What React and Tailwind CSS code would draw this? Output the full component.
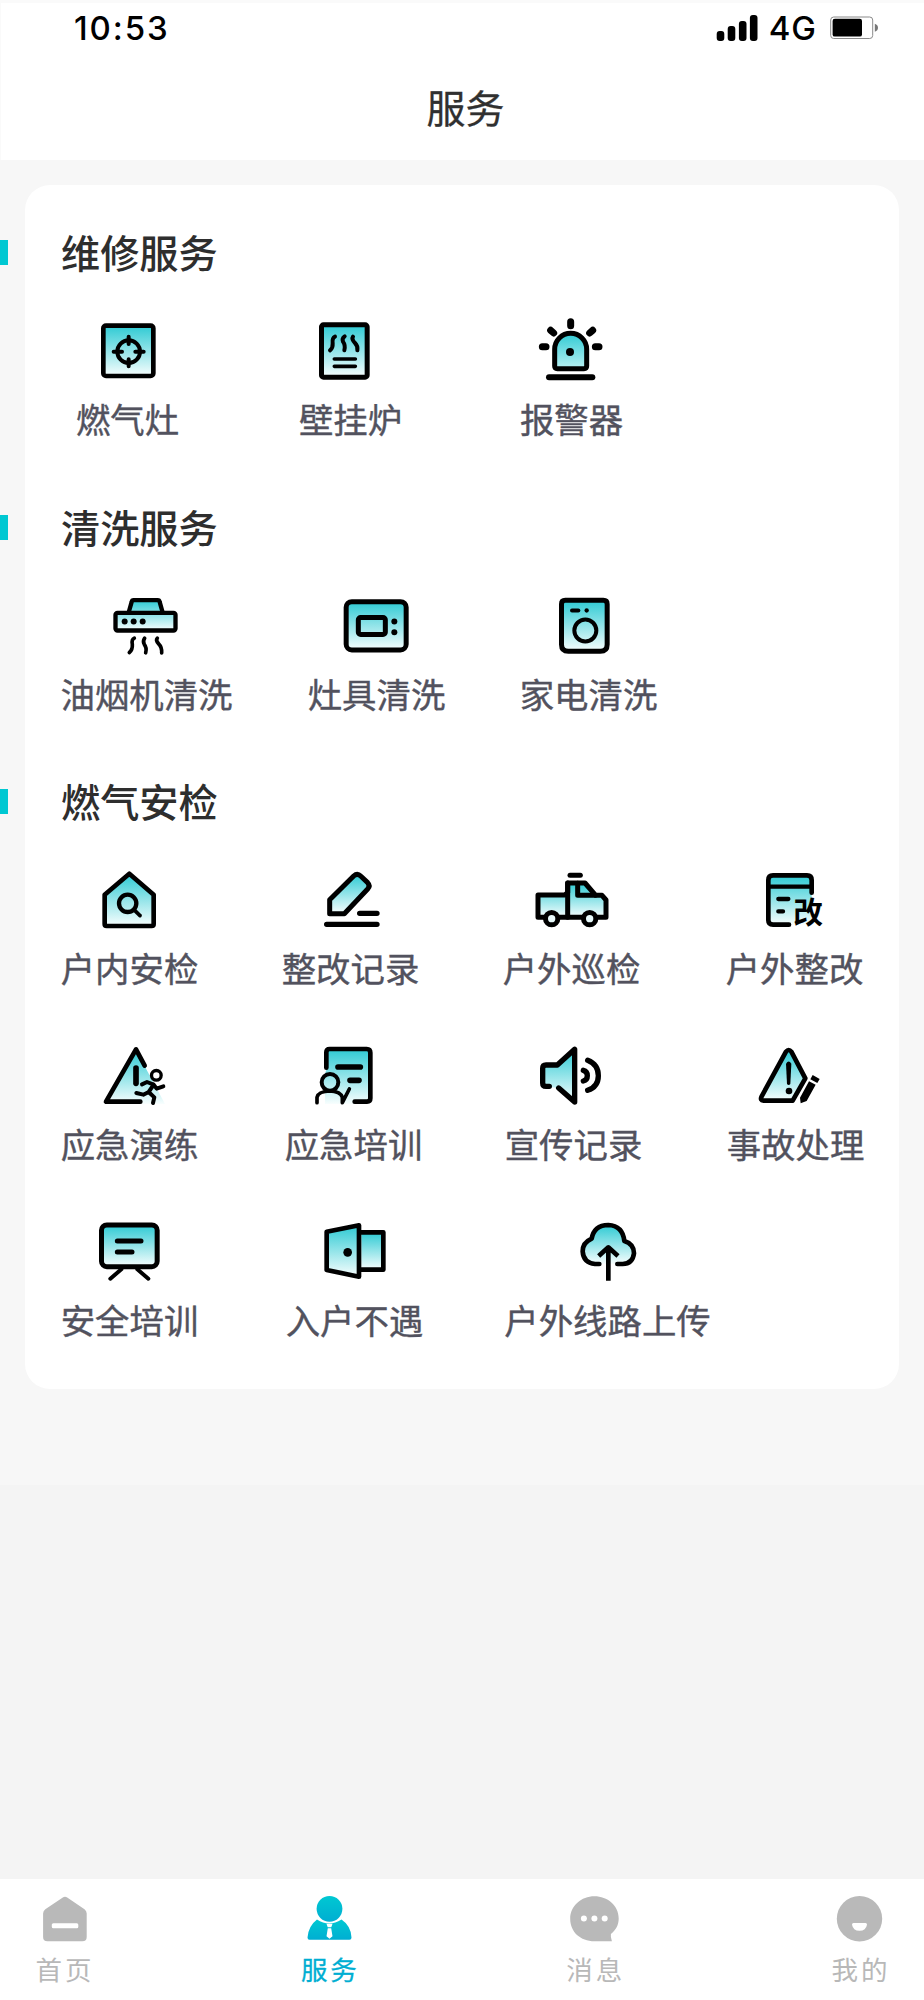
import React from 'react';
import clsx from 'clsx';

const Gradients = () => (
  <svg width="0" height="0" className="absolute" aria-hidden="true">
    <defs>
      <linearGradient id="teal" x1="0" y1="0" x2="0" y2="1">
        <stop offset="0.04" stopColor="#36ccd5" />
        <stop offset="1" stopColor="#f8fefe" />
      </linearGradient>
      <linearGradient id="tealDeep" x1="0" y1="0" x2="0" y2="1">
        <stop offset="0.04" stopColor="#36ccd5" />
        <stop offset="1" stopColor="#b9f1f3" />
      </linearGradient>
      <linearGradient id="active" x1="0" y1="0" x2="0" y2="1">
        <stop offset="0" stopColor="#00c8d2" />
        <stop offset="1" stopColor="#00aed2" />
      </linearGradient>
    </defs>
  </svg>
);

const Glyph = ({ box, w = 14, children }) => (
  <svg
    viewBox={box}
    className="h-20 w-20 shrink-0"
    fill="none"
    stroke="#000"
    strokeWidth={w}
    strokeLinecap="round"
    strokeLinejoin="round"
  >
    {children}
  </svg>
);

const StoveIcon = () => (
  <Glyph box="264 390 240 240">
    <rect x="310" y="437" width="150" height="151" rx="8" fill="url(#teal)" />
    <circle cx="386" cy="515" r="34" strokeWidth="12" />
    <path d="M341 515H366M406 515H431M386 470V492M386 538V559" strokeWidth="12" />
  </Glyph>
);

const BoilerIcon = () => (
  <Glyph box="933 390 240 240" w={15}>
    <rect x="964.5" y="434.5" width="137" height="157" rx="6" fill="url(#teal)" />
    <path d="M1005 470Q996 474 998 490Q999 504 990 511M1034 469Q1025 475 1029 485Q1037 496 1033 511M1059 470Q1054 478 1065 489Q1074 498 1072 511" strokeWidth="12" />
    <path d="M1003 537H1066M1003 559H1066" strokeWidth="11" />
  </Glyph>
);

const AlarmIcon = () => (
  <Glyph box="210 60 240 240" w={15}>
    <path d="M278 228V178a48 48 0 0 1 96 0V228q0 8-8 8H286q-8 0-8-8z" fill="url(#tealDeep)" />
    <circle cx="324" cy="186" r="12" fill="#000" stroke="none" />
    <path d="M326 95V107M266 121L275 129M392 121L383 129M241 170H252M400 170H411" strokeWidth="21" />
    <path d="M261 262H391" strokeWidth="18" />
  </Glyph>
);

const HoodIcon = () => (
  <Glyph box="321 283.5 240 240" w={13}>
    <path d="M386 366L395 334Q396 329 401 329H473Q478 329 479 334L488 366H526V420H347V366Z" fill="url(#teal)" stroke="none" />
    <path d="M386 366L395 334Q396 329 401 329H473Q478 329 479 334L488 366" />
    <rect x="346.5" y="367" width="180" height="53" rx="6" />
    <g fill="#000" stroke="none">
      <circle cx="374" cy="393" r="9" />
      <circle cx="401" cy="393" r="9" />
      <circle cx="428" cy="393" r="9" />
    </g>
    <path d="M403 443Q394 447 397 462Q398 478 388 486M434 443Q427 453 433 462Q441 472 437 487M472 443Q466 450 476 460Q486 470 485 487" strokeWidth="11" />
  </Glyph>
);

const OvenIcon = () => (
  <Glyph box="1011 283.5 240 240" w={15}>
    <rect x="1038.5" y="333.5" width="180" height="145" rx="17" fill="url(#teal)" />
    <rect x="1075" y="381" width="81" height="51" rx="7" />
    <circle cx="1183" cy="393" r="9" fill="#000" stroke="none" />
    <circle cx="1183" cy="425" r="9" fill="#000" stroke="none" />
  </Glyph>
);

const WasherIcon = () => (
  <Glyph box="261 43.5 240 240" w={15}>
    <path d="M310 89.5H424Q435.5 89.5 435.5 101V222Q435.5 242.5 415 242.5H319Q298.5 242.5 298.5 222V101Q298.5 89.5 310 89.5Z" fill="url(#teal)" />
    <circle cx="370" cy="180" r="33" strokeWidth="12" />
    <path d="M330 120H349" strokeWidth="12" />
    <circle cx="374" cy="120" r="6.5" fill="#000" stroke="none" />
  </Glyph>
);

const HouseIcon = () => (
  <Glyph box="270 267 240 240">
    <path d="M388 311L461 374V462Q461 468 455 468H320Q314 468 314 462V374Z" fill="url(#teal)" />
    <circle cx="383" cy="400" r="26" strokeWidth="13" />
    <path d="M404 421L420 437" strokeWidth="11" />
  </Glyph>
);

const EditIcon = () => (
  <Glyph box="933 267 240 240" w={15}>
    <path d="M989 431V389L1061 318Q1072 308 1082 318L1103 338Q1112 347 1103 357L1033 431Z" fill="url(#teal)" />
    <path d="M1079 430H1131M980 463H1131" strokeWidth="16" />
  </Glyph>
);

const TruckIcon = () => (
  <Glyph box="210 27 240 240" w={15}>
    <path d="M228 135H308L317 128V99H369L401 136H420L432 150V202H228Z" fill="url(#teal)" />
    <path d="M317 99V202M347 100V136H400" />
    <path d="M324 76H355" />
    <circle cx="269" cy="206" r="18.5" fill="#e9fbfc" />
    <circle cx="383" cy="206" r="18.5" fill="#e9fbfc" />
  </Glyph>
);

const RectifyIcon = () => (
  <Glyph box="879 27 240 240">
    <path d="M1049 150V90Q1049 76 1035 76H933Q919 76 919 90V211Q919 224 933 224H1049Z" fill="url(#teal)" stroke="none" />
    <path d="M1049 128V90Q1049 76 1035 76H933Q919 76 919 90V211Q919 224 933 224H981" />
    <path d="M919 110H1049M949 147H979M949 184H963" strokeWidth="13" />
    <text x="994" y="219" fontSize="89" fontWeight="700" fill="#000" stroke="none">改</text>
  </Glyph>
);

const DrillIcon = () => (
  <Glyph box="270 15 240 240">
    <path d="M408 60L495 222H318Z" fill="url(#teal)" stroke="none" />
    <path d="M434 107L408 58L318 215H421" />
    <path d="M408 114V160" strokeWidth="17" />
    <circle cx="469" cy="136" r="14.5" strokeWidth="10" />
    <path d="M426 163L441 156L461 164L446 186L463 202L459 219M461 164L470 176L490 169M446 186L430 194L409 189" strokeWidth="12" />
  </Glyph>
);

const CoachIcon = () => (
  <Glyph box="942 15 240 240">
    <path d="M979 57H1111V215L1060 222H975V190L965 157L979 120Z" fill="url(#teal)" stroke="none" />
    <path d="M979 113V67Q979 57 989 57H1100Q1111 57 1111 68V205Q1111 215 1101 215H1064" />
    <path d="M1014 111H1081M1050 151H1077" strokeWidth="17" />
    <circle cx="990" cy="157" r="25" strokeWidth="12" />
    <path d="M951 218V202Q955 184 989 183Q1022 184 1027 202V218L1048 177" strokeWidth="11" />
  </Glyph>
);

const SpeakerIcon = () => (
  <Glyph box="216 15 240 240" w={16}>
    <path d="M242 169V105H287L338 58V216L290 174Z" fill="url(#teal)" stroke="none" />
    <path d="M262 169H252Q242 169 242 159V115Q242 105 252 105H286L338 58V216L290 174" />
    <path d="M364 121Q376 124 376 137Q376 150 364 153M377 91Q409 104 409 137Q409 170 377 181" />
  </Glyph>
);

const AccidentIcon = () => (
  <Glyph box="882 15 240 240">
    <path d="M972 65Q980 55 988 65L1030 145L992 212H905Q893 211 899 199Z" fill="url(#teal)" />
    <path d="M972 101Q980 88 988 101L985 162Q980 168 975 162Z" fill="#000" stroke="none" />
    <circle cx="981" cy="183" r="10" fill="#000" stroke="none" />
    <path d="M1041 154L1061 164L1034 213L1016 220L1014 203ZM1052 135L1073 147L1066 159L1045 148Z" fill="#000" stroke="none" />
  </Glyph>
);

const BoardIcon = () => (
  <Glyph box="270 33 240 240" w={15}>
    <rect x="304.5" y="75" width="167" height="125" rx="16" fill="url(#teal)" />
    <path d="M352 123H423M352 156H396" />
    <path d="M364 208L331 236M412 208L445 236" strokeWidth="12" />
  </Glyph>
);

const DoorIcon = () => (
  <Glyph box="945 33 240 240">
    <path d="M1084 97H1150V209H1084" fill="url(#teal)" />
    <path d="M980 95L1077 76V230L980 210Z" fill="url(#teal)" />
    <circle cx="1043" cy="157" r="13" fill="#000" stroke="none" />
  </Glyph>
);

const UploadIcon = () => (
  <Glyph box="1704 33 240 240">
    <path
      d="M1798 192H1785Q1750 188 1748 154Q1748 128 1775 116Q1782 76 1825 75Q1868 77 1873 123Q1902 132 1902 160Q1898 192 1868 192H1852"
      fill="url(#teal)"
    />
    <path d="M1825 145V242M1796 168L1825 142L1854 168" strokeLinecap="butt" />
  </Glyph>
);

const sections = [
  {
    title: '维修服务',
    rows: [
      [
        { label: '燃气灶', icon: StoveIcon, pos: 'ml-[15px] w-[104px]' },
        { label: '壁挂炉', icon: BoilerIcon, pos: 'ml-[119px] w-[104px]' },
        { label: '报警器', icon: AlarmIcon, pos: 'ml-[117px] w-[104px]' },
      ],
    ],
  },
  {
    title: '清洗服务',
    rows: [
      [
        { label: '油烟机清洗', icon: HoodIcon, pos: 'w-[172px]' },
        { label: '灶具清洗', icon: OvenIcon, pos: 'ml-[75px] w-[138px]' },
        { label: '家电清洗', icon: WasherIcon, pos: 'ml-[74px] w-[138px]' },
      ],
    ],
  },
  {
    title: '燃气安检',
    rows: [
      [
        { label: '户内安检', icon: HouseIcon, pos: 'w-[138px]' },
        { label: '整改记录', icon: EditIcon, pos: 'ml-[83px] w-[138px]' },
        { label: '户外巡检', icon: TruckIcon, pos: 'ml-[83px] w-[138px]' },
        { label: '户外整改', icon: RectifyIcon, pos: 'ml-[85px] w-[138px]' },
      ],
      [
        { label: '应急演练', icon: DrillIcon, pos: 'w-[138px]' },
        { label: '应急培训', icon: CoachIcon, pos: 'ml-[86px] w-[138px]' },
        { label: '宣传记录', icon: SpeakerIcon, pos: 'ml-[82px] w-[138px]' },
        { label: '事故处理', icon: AccidentIcon, pos: 'ml-[84px] w-[138px]' },
      ],
      [
        { label: '安全培训', icon: BoardIcon, pos: 'w-[138px]' },
        { label: '入户不遇', icon: DoorIcon, pos: 'ml-[87px] w-[138px]' },
        { label: '户外线路上传', icon: UploadIcon, pos: 'ml-[81px] w-[206px]' },
      ],
    ],
  },
];

const HomeTab = () => (
  <svg viewBox="0 0 50 48" className="h-12 w-[50px]">
    <path d="M22.8 2.4Q25 .9 27.2 2.4L44.5 14.3Q46.7 16 46.7 18.5V42Q46.7 46.3 42.4 46.3H7.4Q3.1 46.3 3.1 42V18.5Q3.1 16 5.3 14.3Z" fill="#b9b9b9" />
    <rect x="11.8" y="28.2" width="26.5" height="5" rx="1.5" fill="#fff" />
  </svg>
);

const ServiceTab = () => (
  <svg viewBox="0.5 0 50 48" className="h-12 w-[50px]">
    <circle cx="25" cy="13.8" r="12.9" fill="url(#active)" />
    <path d="M12.5 24.6Q24.5 32.5 37 24.6Q46.5 31 47 42.5Q47 44.8 45 44.8H5Q3 44.8 3 42.5Q4 31 12.5 24.6Z" fill="url(#active)" />
    <path d="M22 28.8H28L26.8 32.2H23.2ZM23.3 33.2H26.7L28 41.2L25 43.8L22 41.2Z" fill="#fff" />
  </svg>
);

const MessageTab = () => (
  <svg viewBox="0.6 0 50 48" className="h-12 w-[50px]">
    <path d="M25 1.3C38 1.3 49.3 10.5 49.3 23.5C49.3 30 46.5 35 41.5 39Q41 42 42.5 46.3H25C11 46.3 .8 37 .8 23.8C.8 10.8 12 1.3 25 1.3Z" fill="#b9b9b9" />
    <circle cx="14.5" cy="23.4" r="3" fill="#fff" />
    <circle cx="25" cy="23.4" r="3" fill="#fff" />
    <circle cx="35.3" cy="23.4" r="3" fill="#fff" />
  </svg>
);

const MineTab = () => (
  <svg viewBox="0 0 50 48" className="h-12 w-[50px]">
    <circle cx="24.5" cy="23.8" r="22.7" fill="#b9b9b9" />
    <path d="M18.5 28H30.5Q32 28 32 29.5Q31 35.8 24.5 35.8Q18 35.8 17 29.5Q17 28 18.5 28Z" fill="#fff" />
  </svg>
);

const tabs = [
  { label: '首页', icon: HomeTab },
  { label: '服务', icon: ServiceTab, active: true },
  { label: '消息', icon: MessageTab },
  { label: '我的', icon: MineTab },
];

const StatusBar = () => (
  <div className="flex h-[49px] items-center justify-between pt-px pr-[45px] pl-[73px]">
    <span className="font-['Inter',sans-serif] text-[33px] leading-none font-medium tracking-[1.9px] text-black">10:53</span>
    <div className="flex items-center">
      <svg viewBox="0 0 42 28" className="h-7 w-[42px]">
        <rect x="0.7" y="17" width="7.6" height="10" rx="3" />
        <rect x="11.7" y="12" width="7.6" height="15" rx="3" />
        <rect x="22.9" y="7" width="7.6" height="20" rx="3" />
        <rect x="33.9" y="1" width="7.6" height="26" rx="3" />
      </svg>
      <span className="ml-[11px] font-['Inter',sans-serif] text-[33px] leading-none font-medium tracking-[1px] text-black">4G</span>
      <svg viewBox="0 0 49 24" className="ml-[13px] h-6 w-[49px]">
        <rect x="0.7" y="1" width="42" height="21.5" rx="3" fill="#fff" stroke="#8a8a8a" />
        <rect x="2.6" y="2.8" width="29.4" height="17.8" rx="2.2" />
        <path d="M44.8 7.8Q48 9 48 11.8Q48 14.6 44.8 15.8Z" fill="#777" />
      </svg>
    </div>
  </div>
);

export const App = () => {
  return (
    <div className="flex h-[2000px] w-[924px] flex-col overflow-hidden bg-[#f7f7f7] font-['Noto_Sans_CJK_SC',sans-serif]">
      <Gradients />

      <header className="h-[160px] border-t-[3px] border-l border-[#fafafa] bg-white">
        <StatusBar />
        <h1 className="ml-1.5 h-20 pt-1 text-center text-[39px] leading-[100px] text-[#303030] [-webkit-text-stroke:0.3px]">服务</h1>
      </header>

      <main className="h-[1325px] shrink-0 px-[25px] pt-[25px]">
        <div className="flex h-[1204px] w-[874px] flex-col gap-[55.5px] rounded-[25px] bg-white pt-10 pl-9">
          {sections.map((section) => (
            <section key={section.title}>
              <h2 className="relative h-14 text-[39.2px] leading-[52px] font-medium text-[#2e2e2e]">
                <span className="absolute top-[15px] -left-[61px] h-[25px] w-2 bg-[#00c8d2]" />
                {section.title}
              </h2>
              <div className="mt-[29px] flex flex-col gap-[42px]">
                {section.rows.map((row, i) => (
                  <div key={i} className="flex">
                    {row.map(({ label, icon: Icon, pos }) => (
                      <div key={label} className={clsx('flex shrink-0 flex-col items-center', pos)}>
                        <Icon />
                        <span className="mt-1.5 mr-px h-12 text-[34.4px] leading-[45px] whitespace-nowrap text-[#52525e] [-webkit-text-stroke:0.4px]">
                          {label}
                        </span>
                      </div>
                    ))}
                  </div>
                ))}
              </div>
            </section>
          ))}
        </div>
      </main>

      <div className="flex-1 bg-[#f4f4f4]" />

      <nav className="flex h-[121px] shrink-0 justify-between bg-white pt-4 pr-[34px] pl-[35px]">
        {tabs.map(({ label, icon: Icon, active }) => (
          <div key={label} className="flex w-[59px] flex-col items-center">
            <Icon />
            <span
              className={clsx(
                'mt-[7px] pl-px text-[26.5px] leading-[38px] tracking-[2.9px] whitespace-nowrap',
                active ? 'text-[#00aed2] [-webkit-text-stroke:0.3px]' : 'text-[#b8b8b8]'
              )}
            >
              {label}
            </span>
          </div>
        ))}
      </nav>
    </div>
  );
};
export default App;
